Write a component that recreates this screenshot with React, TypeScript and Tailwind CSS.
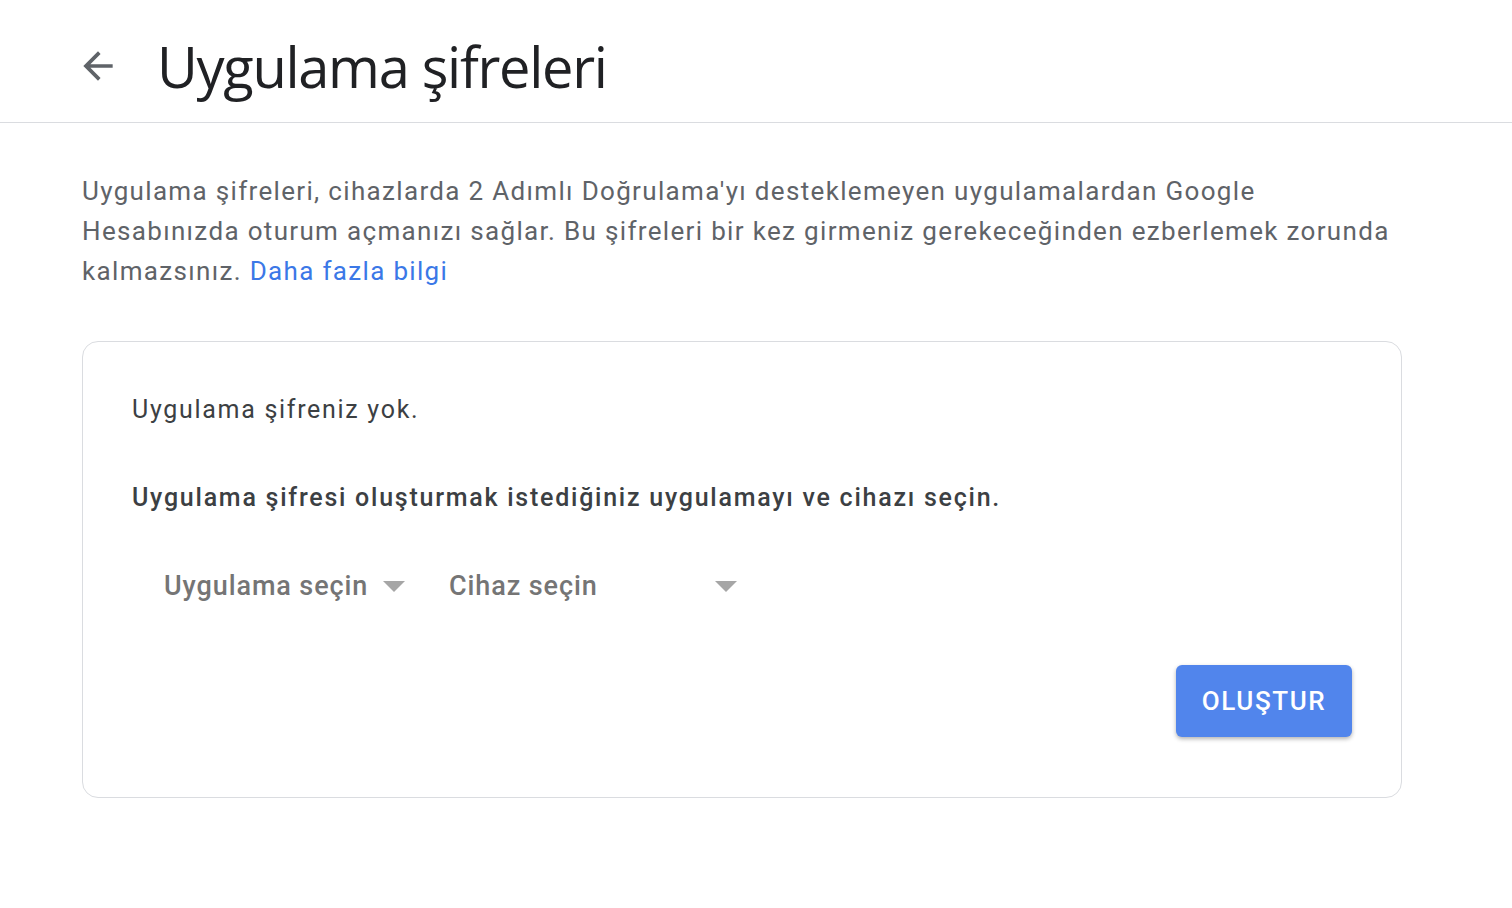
const Caret = () => (
  <svg width="22" height="11" viewBox="0 0 22 11" className="shrink-0">
    <path d="M0 0h22L11 11z" fill="#a6a6a6" />
  </svg>
);

function Dropdown({ label, width }: { label: string; width: string }) {
  return (
    <div className={`flex items-center justify-between ${width}`}>
      <span className="text-[27px] leading-10 font-medium tracking-[0.9px] text-[#757575]">{label}</span>
      <Caret />
    </div>
  );
}

export default function App() {
  return (
    <div className="min-h-screen bg-white font-['Roboto',sans-serif]">
      <header className="flex items-center h-[123px] border-b border-[#dadce0] pl-[76px] pt-[9px]">
        <svg width="44" height="44" viewBox="0 0 24 24" className="shrink-0">
          <path d="M20 11H7.83l5.59-5.59L12 4l-8 8 8 8 1.41-1.41L7.83 13H20v-2z" fill="#5f6368" />
        </svg>
        <h1 className="ml-[37px] text-[56px] leading-none text-[#202124] font-['Open_Sans',sans-serif] tracking-[-1.3px]">
          Uygulama şifreleri
        </h1>
      </header>

      <main className="px-[82px]">
        <p className="mt-12 text-[26px] leading-10 text-[#5f6368] tracking-[1.33px] whitespace-nowrap">
          Uygulama şifreleri, cihazlarda 2 Adımlı Doğrulama'yı desteklemeyen uygulamalardan Google
          <br />
          Hesabınızda oturum açmanızı sağlar. Bu şifreleri bir kez girmeniz gerekeceğinden ezberlemek zorunda
          <br />
          kalmazsınız. <a className="text-[#3b78e7]">Daha fazla bilgi</a>
        </p>

        <section className="mt-[50px] w-[1320px] rounded-2xl border border-[#dadce0] px-[49px] pt-[48px] pb-[60px]">
          <p className="text-[25px] leading-10 tracking-[1.7px] text-[#3c4043]">Uygulama şifreniz yok.</p>
          <p className="mt-12 text-[25px] leading-10 font-medium tracking-[1.75px] text-[#3c4043]">
            Uygulama şifresi oluşturmak istediğiniz uygulamayı ve cihazı seçin.
          </p>
          <div className="mt-12 flex items-center pl-8 gap-[44px]">
            <Dropdown label="Uygulama seçin" width="w-[241px]" />
            <Dropdown label="Cihaz seçin" width="w-[288px]" />
          </div>
          <div className="mt-[59px] flex justify-end">
            <button className="h-[72px] w-[176px] rounded-md bg-[#5185ec] text-white text-[26px] font-medium tracking-[1.6px] shadow-[0_2px_4px_rgba(0,0,0,0.3)]">
              OLUŞTUR
            </button>
          </div>
        </section>
      </main>
    </div>
  );
}
